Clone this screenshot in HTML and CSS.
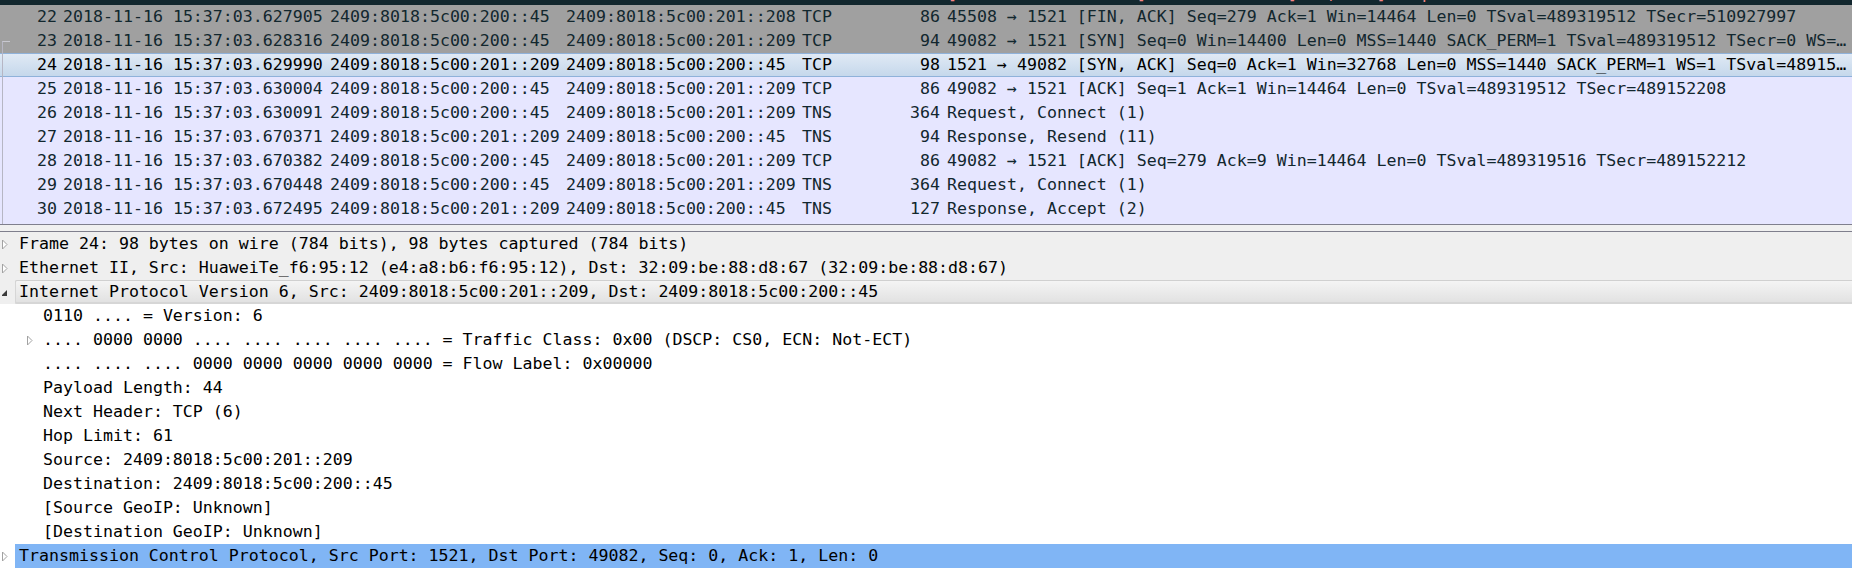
FILE: index.html
```html
<!DOCTYPE html>
<html>
<head>
<meta charset="utf-8">
<title>Wireshark packet list</title>
<link rel="stylesheet" href="styles.css">
</head>
<body>
<div class="app">
  <div class="plist">
    <div class="rows">
      <div class="prow bad"><span class="num">21</span><span>2018-11-16 15:37:03.627836</span><span>2409:8018:5c00:200::45</span><span>2409:8018:5c00:201::208</span><span>TCP</span><span class="len">86</span><span class="info">[TCP Retransmission] 45508 → 1521 [FIN, ACK] Seq=279 Ack=1 Win=14464 Len=0 TSval=489319512 TSecr=510927997</span></div>
      <div class="prow syn"><span class="num">22</span><span>2018-11-16 15:37:03.627905</span><span>2409:8018:5c00:200::45</span><span>2409:8018:5c00:201::208</span><span>TCP</span><span class="len">86</span><span class="info">45508 → 1521 [FIN, ACK] Seq=279 Ack=1 Win=14464 Len=0 TSval=489319512 TSecr=510927997</span></div>
      <div class="prow syn"><span class="num">23</span><span>2018-11-16 15:37:03.628316</span><span>2409:8018:5c00:200::45</span><span>2409:8018:5c00:201::209</span><span>TCP</span><span class="len">94</span><span class="info">49082 → 1521 [SYN] Seq=0 Win=14400 Len=0 MSS=1440 SACK_PERM=1 TSval=489319512 TSecr=0 WS=128</span></div>
      <div class="prow sel"><span class="num">24</span><span>2018-11-16 15:37:03.629990</span><span>2409:8018:5c00:201::209</span><span>2409:8018:5c00:200::45</span><span>TCP</span><span class="len">98</span><span class="info">1521 → 49082 [SYN, ACK] Seq=0 Ack=1 Win=32768 Len=0 MSS=1440 SACK_PERM=1 WS=1 TSval=489152208 TSecr=489319512</span></div>
      <div class="prow tcp"><span class="num">25</span><span>2018-11-16 15:37:03.630004</span><span>2409:8018:5c00:200::45</span><span>2409:8018:5c00:201::209</span><span>TCP</span><span class="len">86</span><span class="info">49082 → 1521 [ACK] Seq=1 Ack=1 Win=14464 Len=0 TSval=489319512 TSecr=489152208</span></div>
      <div class="prow tcp"><span class="num">26</span><span>2018-11-16 15:37:03.630091</span><span>2409:8018:5c00:200::45</span><span>2409:8018:5c00:201::209</span><span>TNS</span><span class="len">364</span><span class="info">Request, Connect (1)</span></div>
      <div class="prow tcp"><span class="num">27</span><span>2018-11-16 15:37:03.670371</span><span>2409:8018:5c00:201::209</span><span>2409:8018:5c00:200::45</span><span>TNS</span><span class="len">94</span><span class="info">Response, Resend (11)</span></div>
      <div class="prow tcp"><span class="num">28</span><span>2018-11-16 15:37:03.670382</span><span>2409:8018:5c00:200::45</span><span>2409:8018:5c00:201::209</span><span>TCP</span><span class="len">86</span><span class="info">49082 → 1521 [ACK] Seq=279 Ack=9 Win=14464 Len=0 TSval=489319516 TSecr=489152212</span></div>
      <div class="prow tcp"><span class="num">29</span><span>2018-11-16 15:37:03.670448</span><span>2409:8018:5c00:200::45</span><span>2409:8018:5c00:201::209</span><span>TNS</span><span class="len">364</span><span class="info">Request, Connect (1)</span></div>
      <div class="prow tcp"><span class="num">30</span><span>2018-11-16 15:37:03.672495</span><span>2409:8018:5c00:201::209</span><span>2409:8018:5c00:200::45</span><span>TNS</span><span class="len">127</span><span class="info">Response, Accept (2)</span></div>
    </div>
    <span class="rel"></span>
  </div>
  <div class="splitter"></div>
  <div class="details">
    <div class="drow shade"><span class="tw"><svg width="13" height="24" viewBox="0 0 13 24"><path d="M0.5 8 L5 12.5 L0.5 17 Z" fill="#fff" stroke="#a2a2a2" stroke-width="1"/></svg></span><span class="lbl">Frame 24: 98 bytes on wire (784 bits), 98 bytes captured (784 bits)</span></div>
    <div class="drow shade"><span class="tw"><svg width="13" height="24" viewBox="0 0 13 24"><path d="M0.5 8 L5 12.5 L0.5 17 Z" fill="#fff" stroke="#a2a2a2" stroke-width="1"/></svg></span><span class="lbl">Ethernet II, Src: HuaweiTe_f6:95:12 (e4:a8:b6:f6:95:12), Dst: 32:09:be:88:d8:67 (32:09:be:88:d8:67)</span></div>
    <div class="drow shade hot"><span class="tw"><svg width="13" height="24" viewBox="0 0 13 24"><path d="M5 10 L5 16 L-1 16 Z" fill="#3a3a3a"/></svg></span><span class="lbl">Internet Protocol Version 6, Src: 2409:8018:5c00:201::209, Dst: 2409:8018:5c00:200::45</span></div>
    <div class="drow c"><span class="tw"></span><span class="lbl">0110 .... = Version: 6</span></div>
    <div class="drow c"><span class="tw"><svg width="13" height="24" viewBox="0 0 13 24"><path d="M1.5 8 L6 12.5 L1.5 17 Z" fill="#fff" stroke="#a2a2a2" stroke-width="1"/></svg></span><span class="lbl">.... 0000 0000 .... .... .... .... .... = Traffic Class: 0x00 (DSCP: CS0, ECN: Not-ECT)</span></div>
    <div class="drow c"><span class="tw"></span><span class="lbl">.... .... .... 0000 0000 0000 0000 0000 = Flow Label: 0x00000</span></div>
    <div class="drow c"><span class="tw"></span><span class="lbl">Payload Length: 44</span></div>
    <div class="drow c"><span class="tw"></span><span class="lbl">Next Header: TCP (6)</span></div>
    <div class="drow c"><span class="tw"></span><span class="lbl">Hop Limit: 61</span></div>
    <div class="drow c"><span class="tw"></span><span class="lbl">Source: 2409:8018:5c00:201::209</span></div>
    <div class="drow c"><span class="tw"></span><span class="lbl">Destination: 2409:8018:5c00:200::45</span></div>
    <div class="drow c"><span class="tw"></span><span class="lbl">[Source GeoIP: Unknown]</span></div>
    <div class="drow c"><span class="tw"></span><span class="lbl">[Destination GeoIP: Unknown]</span></div>
    <div class="drow cur"><span class="tw"><svg width="13" height="24" viewBox="0 0 13 24"><path d="M0.5 8 L5 12.5 L0.5 17 Z" fill="#fff" stroke="#a2a2a2" stroke-width="1"/></svg></span><span class="lbl">Transmission Control Protocol, Src Port: 1521, Dst Port: 49082, Seq: 0, Ack: 1, Len: 0</span></div>
  </div>
</div>
</body>
</html>
```

FILE: styles.css
```css
html, body {
  margin: 0;
  padding: 0;
  height: 572px;
  overflow: hidden;
  background: #ffffff;
}

.app {
  font-family: "DejaVu Sans Mono", "Liberation Mono", monospace;
  font-size: 16.6px;
  color: #000;
}

/* ---------- packet list ---------- */
.plist {
  position: relative;
  height: 224px;
  overflow: hidden;
  background: #e6e6ff;
  border-bottom: 1px solid #7f7f8d;
}

.rows {
  margin-top: -19px;
}

.prow {
  display: grid;
  grid-template-columns: 60px 267px 236px 236px 81px 63px minmax(0, 1fr);
  height: 24px;
  line-height: 24px;
  white-space: nowrap;
  color: #12272e;
  box-sizing: border-box;
}

.prow > span {
  padding: 0 3px;
}

.prow .num,
.prow .len {
  text-align: right;
}

.prow .info {
  padding: 0 3px 0 4px;
  overflow: hidden;
  text-overflow: ellipsis;
}

.bad {
  background: #12272e;
  color: #f78787;
  padding-top: 1px;
  overflow: hidden;
}

.syn {
  background: #a0a0a0;
}

.tcp {
  background: #e6e6ff;
}

.sel {
  background: linear-gradient(#e1eaf5, #c4d7eb);
  box-shadow: inset 0 1px #8fb2da, inset 0 -1px #8fb2da;
  color: #000;
}

.rel {
  position: absolute;
  left: 2px;
  top: 41px;
  bottom: 0;
  width: 7px;
  border-left: 1px solid #b6b6c4;
  border-top: 1px solid #c8c8d0;
}

/* ---------- splitter ---------- */
.splitter {
  height: 6px;
  background: #f0f0f0;
}

/* ---------- packet details ---------- */
.details {
  border-top: 1px solid #7f7f8d;
  background: #ffffff;
}

.drow {
  display: flex;
  height: 24px;
  line-height: 24px;
  white-space: nowrap;
  padding-left: 2px;
}

.drow.c {
  padding-left: 26px;
}

.tw {
  width: 13px;
  flex: none;
  display: flex;
}

.lbl {
  flex: 1;
  padding-left: 4px;
  box-sizing: border-box;
}

.shade {
  background: #efefef;
}

.hot .lbl {
  background: linear-gradient(#f5f5f5, #e0e0e0);
  box-shadow: inset 0 1px #d0d0d0, inset 0 -2px #d6d6d6, inset 1px 0 #d6d6d6;
  border-radius: 2px 0 0 2px;
}

.cur .lbl {
  background: #80b5f5;
}
```
